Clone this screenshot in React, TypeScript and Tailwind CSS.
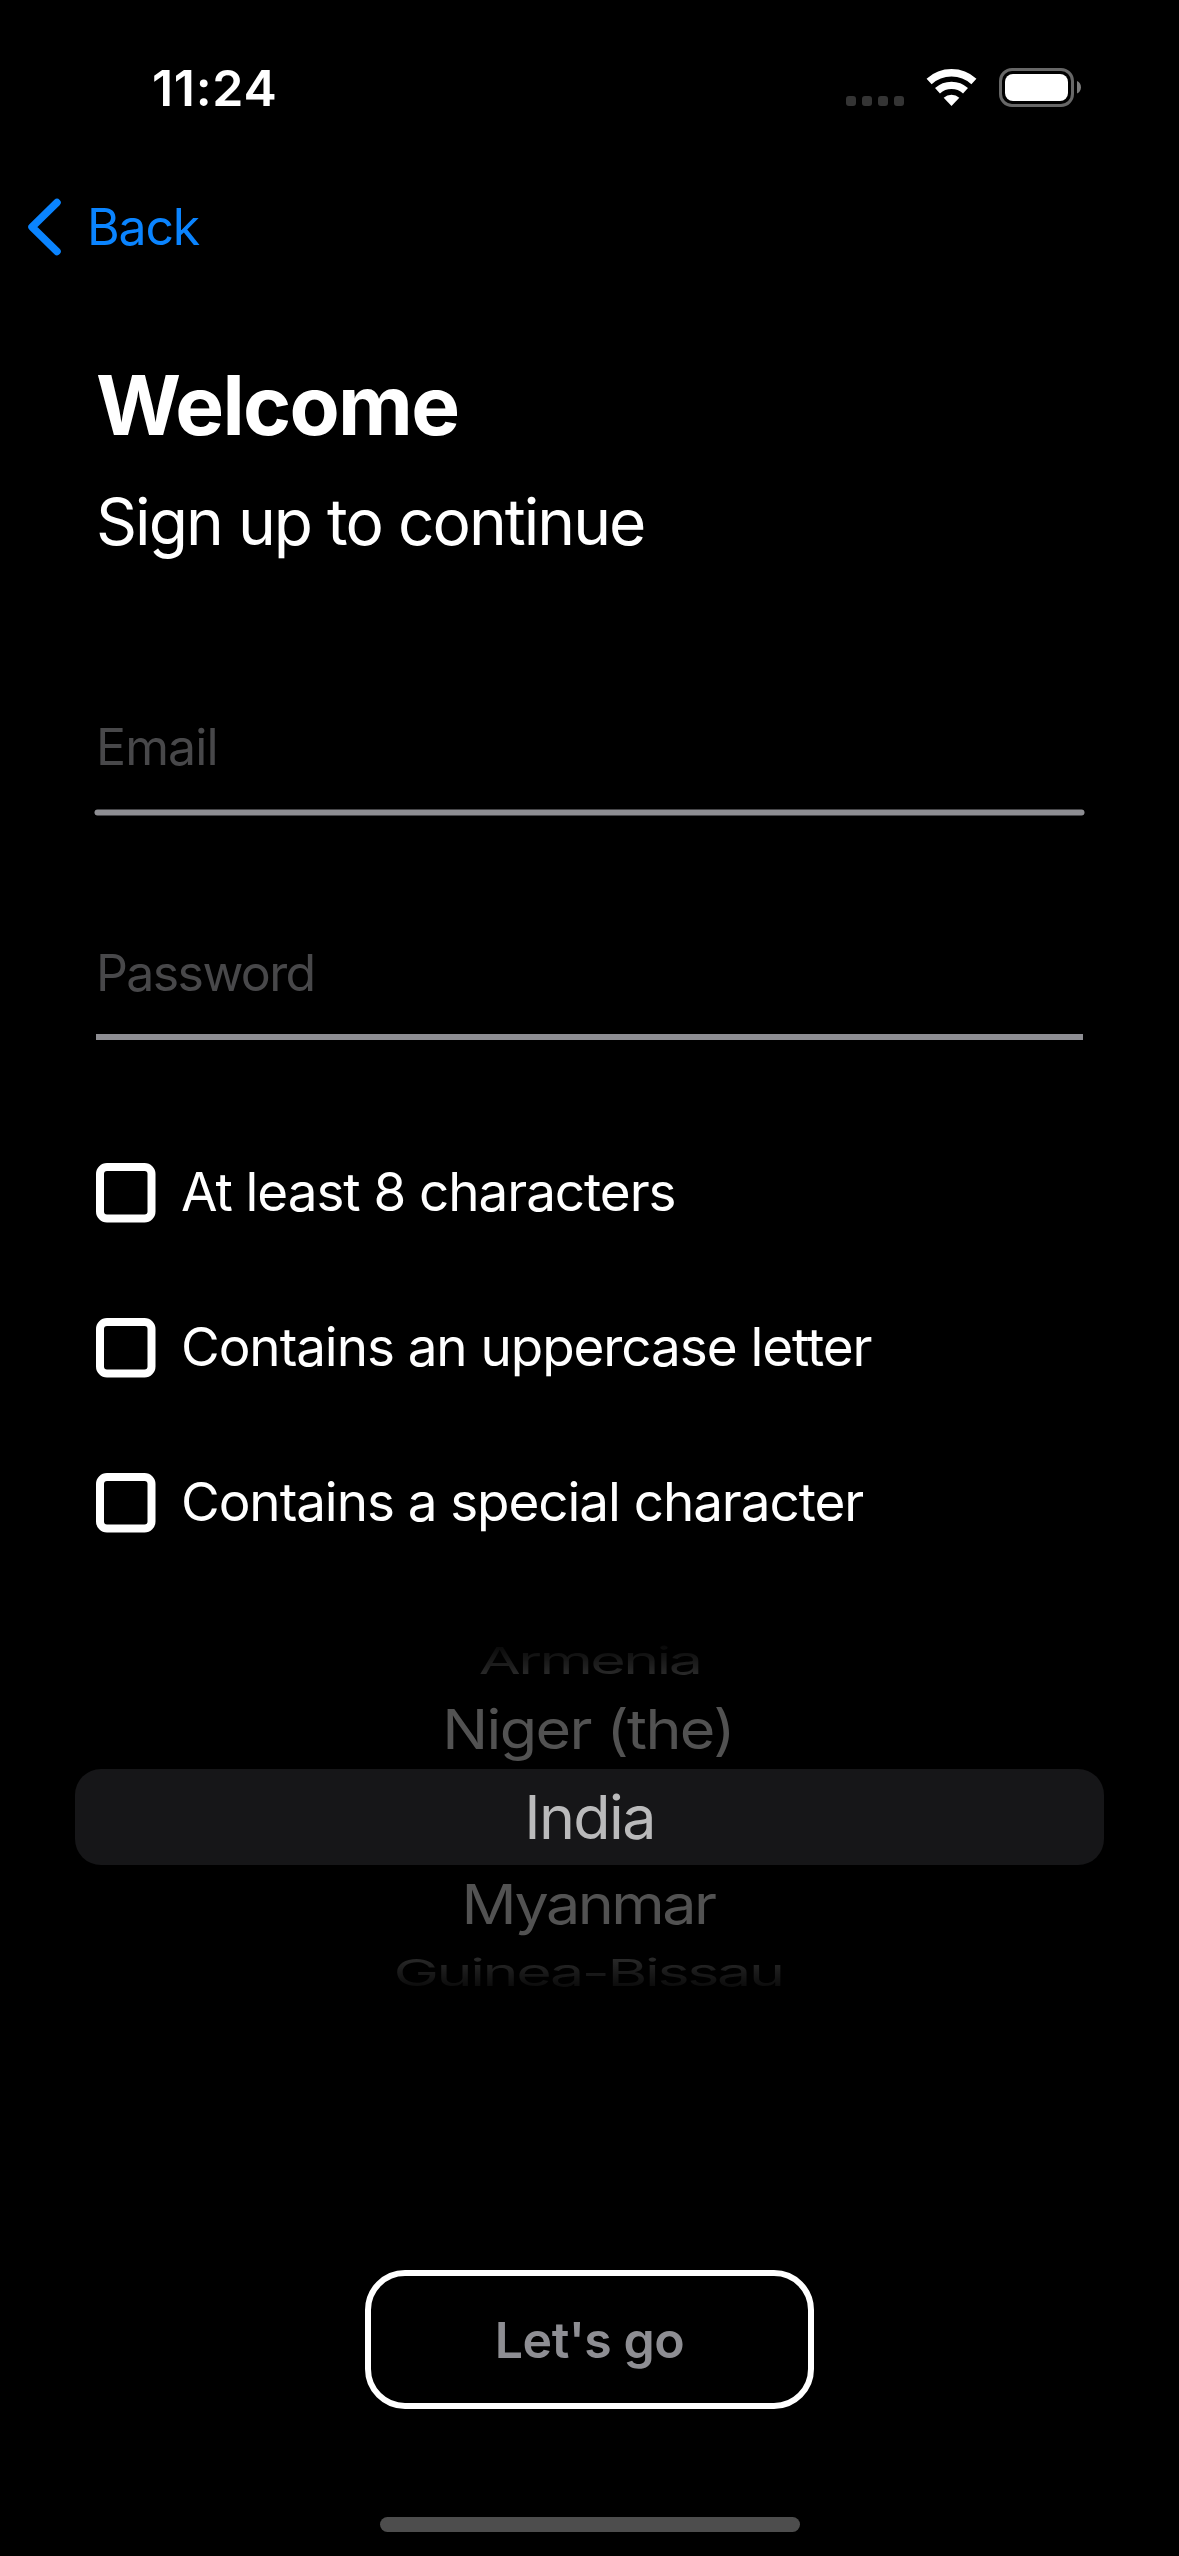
function SignalDots() {
  return (
    <svg width="58" height="40" viewBox="0 0 58 40" fill="#343434">
      <rect x="0" y="28" width="10" height="10" rx="3" />
      <rect x="16" y="28" width="10" height="10" rx="3" />
      <rect x="32" y="28" width="10" height="10" rx="3" />
      <rect x="48" y="28" width="10" height="10" rx="3" />
    </svg>
  );
}

function WifiIcon() {
  return (
    <svg width="51" height="40" viewBox="0 0 51 40" fill="none" stroke="#fff">
      <path d="M3.1 13.5A33.2 33.2 0 0 1 47.9 13.5" strokeWidth="7.5" />
      <path d="M11.5 22.75A20.7 20.7 0 0 1 39.5 22.75" strokeWidth="7.3" />
      <path d="M25.5 38L17.7 29.7A11.6 11.6 0 0 1 33.3 29.7Z" fill="#fff" stroke="none" />
    </svg>
  );
}

function BatteryIcon() {
  return (
    <svg width="82" height="40" viewBox="0 0 82 40" fill="none">
      <rect x="1.5" y="1.5" width="72" height="36" rx="11.5" stroke="#676767" strokeWidth="3" />
      <rect x="6" y="6" width="63" height="27" rx="8" fill="#fff" />
      <path d="M78 13C80.6 14.2 82 16.6 82 19.3S80.6 24.400 78 25.600Z" fill="#7c7c7c" />
    </svg>
  );
}

function StatusBar() {
  return (
    <div className="flex h-[176px] items-center justify-between pr-[98px] pl-[152px]">
      <span className="text-[50px] leading-[60px] font-semibold tracking-[0.7px]">11:24</span>
      <div className="flex items-center gap-[22px]">
        <SignalDots />
        <WifiIcon />
        <BatteryIcon />
      </div>
    </div>
  );
}

function NavBar() {
  return (
    <nav className="flex h-[102px] items-center gap-[21px] pl-[26px] text-[#0a84ff]">
      <svg width="40" height="62" viewBox="0 0 40 62" fill="none">
        <path
          d="M31 6.500L6 31L31 55.500"
          stroke="currentColor"
          strokeWidth="7.500"
          strokeLinecap="round"
          strokeLinejoin="round"
        />
      </svg>
      <span className="text-[50px] leading-[60px] tracking-[-1.2px]">Back</span>
    </nav>
  );
}

function Requirement({ label }: { label: string }) {
  return (
    <li className="flex h-[60px] items-center gap-[25px]">
      <svg width="60" height="60" viewBox="0 0 60 60" fill="none">
        <rect x="4" y="4" width="51.500" height="51.500" rx="7" stroke="#fff" strokeWidth="8" />
      </svg>
      <span className="pb-0.5 text-[53px] leading-[60px] tracking-[-1.06px]">{label}</span>
    </li>
  );
}

function CountryPicker() {
  return (
    <div className="mt-[98px] flex flex-col items-center text-[61px] leading-[61px] whitespace-nowrap">
      <div className="flex h-[59px] items-center">
        <span className="scale-y-[0.608] bg-linear-to-b from-[#060606] to-[#2e2e2e] bg-clip-text tracking-[-2.64px] text-transparent">
          Armenia
        </span>
      </div>
      <div className="flex h-[79px] items-center pr-[3px]">
        <span className="scale-y-[0.9] tracking-[-1.6px] text-[#525252]">Niger (the)</span>
      </div>
      <div className="flex h-24 w-[1029px] items-center justify-center rounded-[26px] bg-[#161618]">
        <span className="tracking-[-1.64px] text-[#bababb]">India</span>
      </div>
      <div className="flex h-[78px] items-center pr-[3px]">
        <span className="scale-y-[0.9] tracking-[-2.46px] text-[#525252]">Myanmar</span>
      </div>
      <div className="flex h-[59px] items-center pr-[3px]">
        <span className="scale-y-[0.608] bg-linear-to-b from-[#2e2e2e] to-[#080808] bg-clip-text tracking-[-2.39px] text-transparent">
          Guinea-Bissau
        </span>
      </div>
    </div>
  );
}

export default function App() {
  return (
    <div className="flex h-[2556px] w-[1179px] flex-col overflow-hidden bg-black font-['Inter',sans-serif] text-white">
      <StatusBar />
      <NavBar />
      <main className="flex flex-col">
        <section className="px-24">
          <h1 className="mt-[78px] text-[82px] leading-[100px] font-bold tracking-[-1.7px]">Welcome</h1>
          <p className="mt-[26px] text-[64px] leading-[80px] tracking-[-1.95px]">Sign up to continue</p>

          <div className="mt-[155px] text-[50px] leading-[60px] tracking-[-0.9px] text-[#48484a]">Email</div>
          <div className="mt-8 -mr-px -ml-0.5 h-1.5 translate-x-[0.5px] translate-y-[0.5px] rounded-full bg-[#8e8e93]" />

          <div className="mt-32 text-[50px] leading-[60px] tracking-[-1.6px] text-[#48484a]">Password</div>
          <div className="mt-[31px] h-1.5 bg-[#8e8e93]" />

          <ul className="mt-[123px] flex flex-col gap-[95px]">
            <Requirement label="At least 8 characters" />
            <Requirement label="Contains an uppercase letter" />
            <Requirement label="Contains a special character" />
          </ul>
        </section>

        <CountryPicker />

        <button className="mt-[268px] ml-[365px] flex h-[139px] w-[449px] items-center justify-center rounded-[40px] border-[6px] border-white text-[50px] leading-[60px] font-semibold tracking-[-0.5px] text-[#8e8e93]">
          Let&apos;s go
        </button>
      </main>
      <div className="mt-[108px] ml-[380px] h-[15px] w-[420px] rounded-full bg-[#4d4d4d]" />
    </div>
  );
}
